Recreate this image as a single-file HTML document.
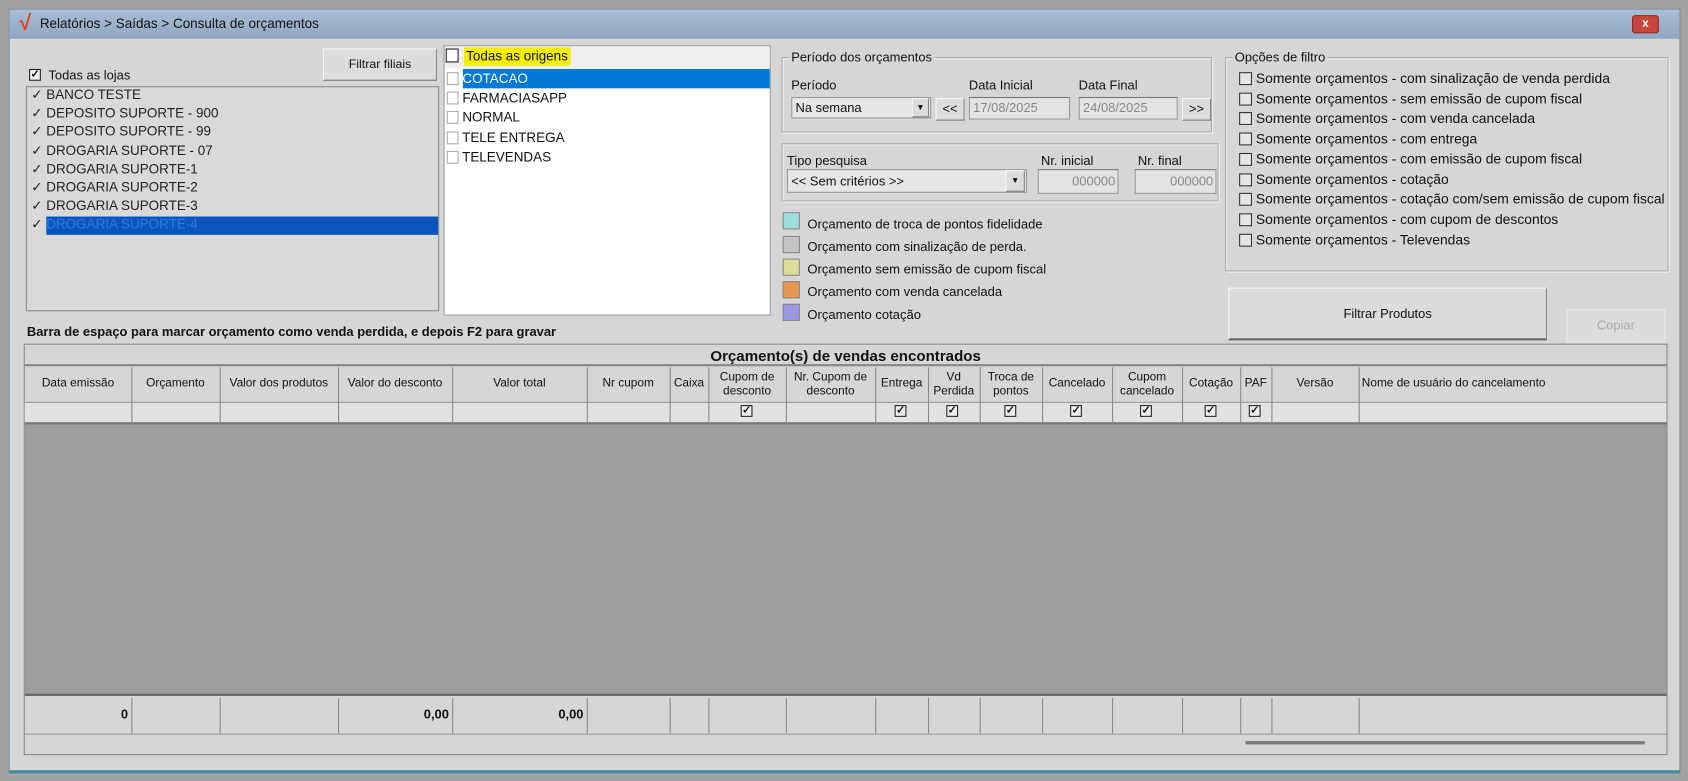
<!DOCTYPE html>
<html><head><meta charset="utf-8"><style>
*{box-sizing:border-box;margin:0;padding:0}
html,body{width:1688px;height:781px;overflow:hidden;background:#a3a3a3}
#s{position:absolute;left:0;top:0;width:1568px;height:725px;transform:scale(1.07653,1.07724);transform-origin:0 0;font-family:"Liberation Sans",sans-serif;font-size:12px;color:#111}
.a{position:absolute}
.win{left:8px;top:8px;width:1553px;height:710px;background:#d6d6d6;border:1px solid #7a8796;border-bottom:3px solid #3f8a9e}
.title{left:9px;top:9px;width:1551px;height:27px;background:linear-gradient(#a9bdd4,#8fa7c2);}
.cb{position:absolute;width:12px;height:12px;border:1px solid #333;background:#fff}
.chk{position:absolute;width:11px;height:11px;border:1px solid #222;background:#eee;font-size:10px;line-height:9px;text-align:center;font-weight:bold}
.btn{position:absolute;background:#dcdcdc;border:1px solid #f4f4f4;border-right-color:#888;border-bottom-color:#777;text-align:center}
.inp{position:absolute;background:#e3e3e3;border:1px solid #999;border-top-color:#777;color:#888}
.grp{position:absolute;border:1px solid #aaa;box-shadow:1px 1px 0 #f4f4f4 inset,1px 1px 0 #f4f4f4}
.lg{position:absolute;background:#d6d6d6;padding:0 2px;top:-8px;left:6px}
.col{position:absolute;top:0;bottom:0;border-left:1px solid #888}
.hd{position:absolute;top:341px;height:31px;font-size:11px;line-height:13px;text-align:center;display:flex;align-items:center;justify-content:center}
</style></head><body><div id="s">
<div class="a win"></div>
<div class="a title"></div>
<div class="a" style="left:18px;top:12px;color:#e0401a;font-size:20px;font-weight:bold;line-height:20px">√</div>
<div class="a" style="left:37px;top:15px;font-size:12.5px;color:#111">Relatórios &gt; Saídas &gt; Consulta de orçamentos</div>
<div class="a" style="left:1516px;top:14px;width:25px;height:17px;background:#c9463c;border:1px solid #8a2a22;border-radius:3px;color:#fff;text-align:center;font-weight:bold;font-size:11px;line-height:15px">x</div>

<div class="btn" style="left:300px;top:45px;width:106px;height:30px;line-height:28px;font-size:11.5px">Filtrar filiais</div>
<div class="chk" style="left:27px;top:64px">✓</div>
<div class="a" style="left:45px;top:63px;font-size:12px">Todas as lojas</div>
<div class="a" style="left:24px;top:80px;width:384px;height:209px;background:#d9d9d9;border:1px solid #888"></div>
<div class="a" style="left:43px;top:201px;width:364px;height:17px;background:#0a55c0"></div>
<div class="a" style="left:29px;top:80px;font-size:12.5px;line-height:17.2px;color:#222">
<div>✓ BANCO TESTE</div><div>✓ DEPOSITO SUPORTE - 900</div><div>✓ DEPOSITO SUPORTE - 99</div><div>✓ DROGARIA SUPORTE - 07</div><div>✓ DROGARIA SUPORTE-1</div><div>✓ DROGARIA SUPORTE-2</div><div>✓ DROGARIA SUPORTE-3</div><div>✓ <span style="color:#2a7de0">DROGARIA SUPORTE-4</span></div></div>

<div class="a" style="left:412px;top:42px;width:304px;height:251px;background:#fff;border:1px solid #999"></div>
<div class="a" style="left:413px;top:43px;width:302px;height:20px;background:#efefef"></div>
<div class="cb" style="left:414px;top:45px;width:12px;height:13px;border-color:#222"></div>
<div class="a" style="left:431px;top:44px;background:#f5ef00;padding:0 2px;font-size:12.5px;line-height:17px">Todas as origens</div>
<div class="a" style="left:430px;top:64px;width:285px;height:18px;background:#0078d7"></div>
<div class="a" style="left:415px;top:64px;font-size:12.5px;line-height:18.2px">
<div><span class="cb" style="position:relative;display:inline-block;width:11px;height:12px;border-color:#aaa;vertical-align:-2px"></span> <span style="color:#fff">COTACAO</span></div>
<div><span class="cb" style="position:relative;display:inline-block;width:11px;height:12px;border-color:#aaa;vertical-align:-2px"></span> FARMACIASAPP</div>
<div><span class="cb" style="position:relative;display:inline-block;width:11px;height:12px;border-color:#aaa;vertical-align:-2px"></span> NORMAL</div>
<div><span class="cb" style="position:relative;display:inline-block;width:11px;height:12px;border-color:#aaa;vertical-align:-2px"></span> TELE ENTREGA</div>
<div><span class="cb" style="position:relative;display:inline-block;width:11px;height:12px;border-color:#aaa;vertical-align:-2px"></span> TELEVENDAS</div></div>

<div class="grp" style="left:726px;top:53px;width:400px;height:70px"><div class="lg">Período dos orçamentos</div></div>
<div class="a" style="left:735px;top:72px">Período</div>
<div class="a" style="left:900px;top:72px">Data Inicial</div>
<div class="a" style="left:1002px;top:72px">Data Final</div>
<div class="a" style="left:735px;top:90px;width:130px;height:20px;background:#e6e6e6;border:1px solid #999;padding:2px 3px">Na semana</div>
<div class="btn" style="left:847px;top:91px;width:16px;height:18px;font-size:8px;line-height:16px">▼</div>
<div class="btn" style="left:869px;top:91px;width:27px;height:21px;line-height:19px">&lt;&lt;</div>
<div class="inp" style="left:900px;top:90px;width:94px;height:21px;padding:2px 3px">17/08/2025</div>
<div class="inp" style="left:1002px;top:90px;width:92px;height:21px;padding:2px 3px">24/08/2025</div>
<div class="btn" style="left:1098px;top:91px;width:27px;height:21px;line-height:19px">&gt;&gt;</div>

<div class="grp" style="left:726px;top:133px;width:406px;height:54px"></div>
<div class="a" style="left:731px;top:142px">Tipo pesquisa</div>
<div class="a" style="left:967px;top:142px">Nr. inicial</div>
<div class="a" style="left:1057px;top:142px">Nr. final</div>
<div class="a" style="left:731px;top:157px;width:223px;height:22px;background:#e6e6e6;border:1px solid #999;padding:3px 3px">&lt;&lt; Sem critérios &gt;&gt;</div>
<div class="btn" style="left:934px;top:158px;width:18px;height:20px;font-size:8px;line-height:18px">▼</div>
<div class="inp" style="left:964px;top:157px;width:75px;height:23px;text-align:right;padding:3px 2px">000000</div>
<div class="inp" style="left:1054px;top:157px;width:76px;height:23px;text-align:right;padding:3px 2px">000000</div>

<div class="a" style="left:727px;top:197px;width:16px;height:16px;background:#9fdcdc;border:1px solid #888"></div>
<div class="a" style="left:727px;top:219px;width:16px;height:16px;background:#c4c4c4;border:1px solid #888"></div>
<div class="a" style="left:727px;top:240px;width:16px;height:16px;background:#dede98;border:1px solid #888"></div>
<div class="a" style="left:727px;top:261px;width:16px;height:16px;background:#e39a50;border:1px solid #888"></div>
<div class="a" style="left:727px;top:282px;width:16px;height:16px;background:#9a9ae0;border:1px solid #888"></div>
<div class="a" style="left:750px;top:198px;line-height:21px;font-size:12.1px">
<div>Orçamento de troca de pontos fidelidade</div><div>Orçamento com sinalização de perda.</div><div>Orçamento sem emissão de cupom fiscal</div><div>Orçamento com venda cancelada</div><div>Orçamento cotação</div></div>

<div class="grp" style="left:1138px;top:53px;width:412px;height:199px"><div class="lg">Opções de filtro</div></div>
<div class="a" style="left:1151px;top:64px;line-height:18.7px;font-size:12.9px">
<div><span class="cb" style="position:relative;display:inline-block;vertical-align:-2px;background:#e6e6e6"></span> Somente orçamentos - com sinalização de venda perdida</div>
<div><span class="cb" style="position:relative;display:inline-block;vertical-align:-2px;background:#e6e6e6"></span> Somente orçamentos - sem emissão de cupom fiscal</div>
<div><span class="cb" style="position:relative;display:inline-block;vertical-align:-2px;background:#e6e6e6"></span> Somente orçamentos - com venda cancelada</div>
<div><span class="cb" style="position:relative;display:inline-block;vertical-align:-2px;background:#e6e6e6"></span> Somente orçamentos - com entrega</div>
<div><span class="cb" style="position:relative;display:inline-block;vertical-align:-2px;background:#e6e6e6"></span> Somente orçamentos - com emissão de cupom fiscal</div>
<div><span class="cb" style="position:relative;display:inline-block;vertical-align:-2px;background:#e6e6e6"></span> Somente orçamentos - cotação</div>
<div><span class="cb" style="position:relative;display:inline-block;vertical-align:-2px;background:#e6e6e6"></span> Somente orçamentos - cotação com/sem emissão de cupom fiscal</div>
<div><span class="cb" style="position:relative;display:inline-block;vertical-align:-2px;background:#e6e6e6"></span> Somente orçamentos - com cupom de descontos</div>
<div><span class="cb" style="position:relative;display:inline-block;vertical-align:-2px;background:#e6e6e6"></span> Somente orçamentos - Televendas</div></div>

<div class="btn" style="left:1141px;top:267px;width:296px;height:49px;line-height:46px;border-bottom:2px solid #666">Filtrar Produtos</div>
<div class="btn" style="left:1455px;top:287px;width:92px;height:31px;line-height:29px;color:#aaa;border-color:#e4e4e4">Copiar</div>

<div class="a" style="left:25px;top:301px;font-weight:bold;font-size:12px">Barra de espaço para marcar orçamento como venda perdida, e depois F2 para gravar</div>

<div class="a" style="left:22px;top:319px;width:1527px;height:382px;background:#d6d6d6;border:1px solid #888"></div>
<div class="a" style="left:23px;top:320px;width:1525px;height:20px;text-align:center;font-weight:bold;font-size:14px;line-height:20px;border-bottom:2px solid #888">Orçamento(s) de vendas encontrados</div>
<div class="a" style="left:23px;top:373px;width:1525px;height:19px;background:#e2e2e2;border-top:1px solid #999"></div>
<div class="a" style="left:23px;top:392px;width:1525px;height:254px;background:#9d9d9d;border-top:2px solid #777;border-bottom:2px solid #666"></div>
<div class="a" style="left:23px;top:341px;width:1525px;height:51px">
<div class="col" style="left:99px"></div><div class="col" style="left:181px"></div><div class="col" style="left:291px"></div><div class="col" style="left:397px"></div><div class="col" style="left:522px"></div><div class="col" style="left:599px"></div><div class="col" style="left:635px"></div><div class="col" style="left:707px"></div><div class="col" style="left:790px"></div><div class="col" style="left:839px"></div><div class="col" style="left:887px"></div><div class="col" style="left:945px"></div><div class="col" style="left:1010px"></div><div class="col" style="left:1075px"></div><div class="col" style="left:1129px"></div><div class="col" style="left:1158px"></div><div class="col" style="left:1239px"></div></div>
<div class="a" style="left:23px;top:648px;width:1525px;height:33px">
<div class="col" style="left:99px"></div><div class="col" style="left:181px"></div><div class="col" style="left:291px"></div><div class="col" style="left:397px"></div><div class="col" style="left:522px"></div><div class="col" style="left:599px"></div><div class="col" style="left:635px"></div><div class="col" style="left:707px"></div><div class="col" style="left:790px"></div><div class="col" style="left:839px"></div><div class="col" style="left:887px"></div><div class="col" style="left:945px"></div><div class="col" style="left:1010px"></div><div class="col" style="left:1075px"></div><div class="col" style="left:1129px"></div><div class="col" style="left:1158px"></div><div class="col" style="left:1239px"></div></div>
<div class="hd" style="left:23px;width:99px">Data emissão</div>
<div class="hd" style="left:122px;width:82px">Orçamento</div>
<div class="hd" style="left:204px;width:110px">Valor dos produtos</div>
<div class="hd" style="left:314px;width:106px">Valor do desconto</div>
<div class="hd" style="left:420px;width:125px">Valor total</div>
<div class="hd" style="left:545px;width:77px">Nr cupom</div>
<div class="hd" style="left:622px;width:36px">Caixa</div>
<div class="hd" style="left:658px;width:72px">Cupom de<br>desconto</div>
<div class="hd" style="left:730px;width:83px">Nr. Cupom de<br>desconto</div>
<div class="hd" style="left:813px;width:49px">Entrega</div>
<div class="hd" style="left:862px;width:48px">Vd<br>Perdida</div>
<div class="hd" style="left:910px;width:58px">Troca de<br>pontos</div>
<div class="hd" style="left:968px;width:65px">Cancelado</div>
<div class="hd" style="left:1033px;width:65px">Cupom<br>cancelado</div>
<div class="hd" style="left:1098px;width:54px">Cotação</div>
<div class="hd" style="left:1152px;width:29px">PAF</div>
<div class="hd" style="left:1181px;width:81px">Versão</div>
<div class="hd" style="left:1262px;width:286px;justify-content:flex-start;padding-left:3px">Nome de usuário do cancelamento</div>
<div class="chk" style="left:688px;top:376px">✓</div>
<div class="chk" style="left:831px;top:376px">✓</div>
<div class="chk" style="left:879px;top:376px">✓</div>
<div class="chk" style="left:933px;top:376px">✓</div>
<div class="chk" style="left:994px;top:376px">✓</div>
<div class="chk" style="left:1059px;top:376px">✓</div>
<div class="chk" style="left:1119px;top:376px">✓</div>
<div class="chk" style="left:1160px;top:376px">✓</div>
<div class="a" style="left:23px;top:656px;width:96px;text-align:right;font-weight:bold">0</div>
<div class="a" style="left:314px;top:656px;width:103px;text-align:right;font-weight:bold">0,00</div>
<div class="a" style="left:420px;top:656px;width:122px;text-align:right;font-weight:bold">0,00</div>
<div class="a" style="left:23px;top:681px;width:1525px;height:1px;background:#999"></div>
<div class="a" style="left:1157px;top:688px;width:371px;height:3px;background:#7a7a7a"></div>
</div></body></html>
